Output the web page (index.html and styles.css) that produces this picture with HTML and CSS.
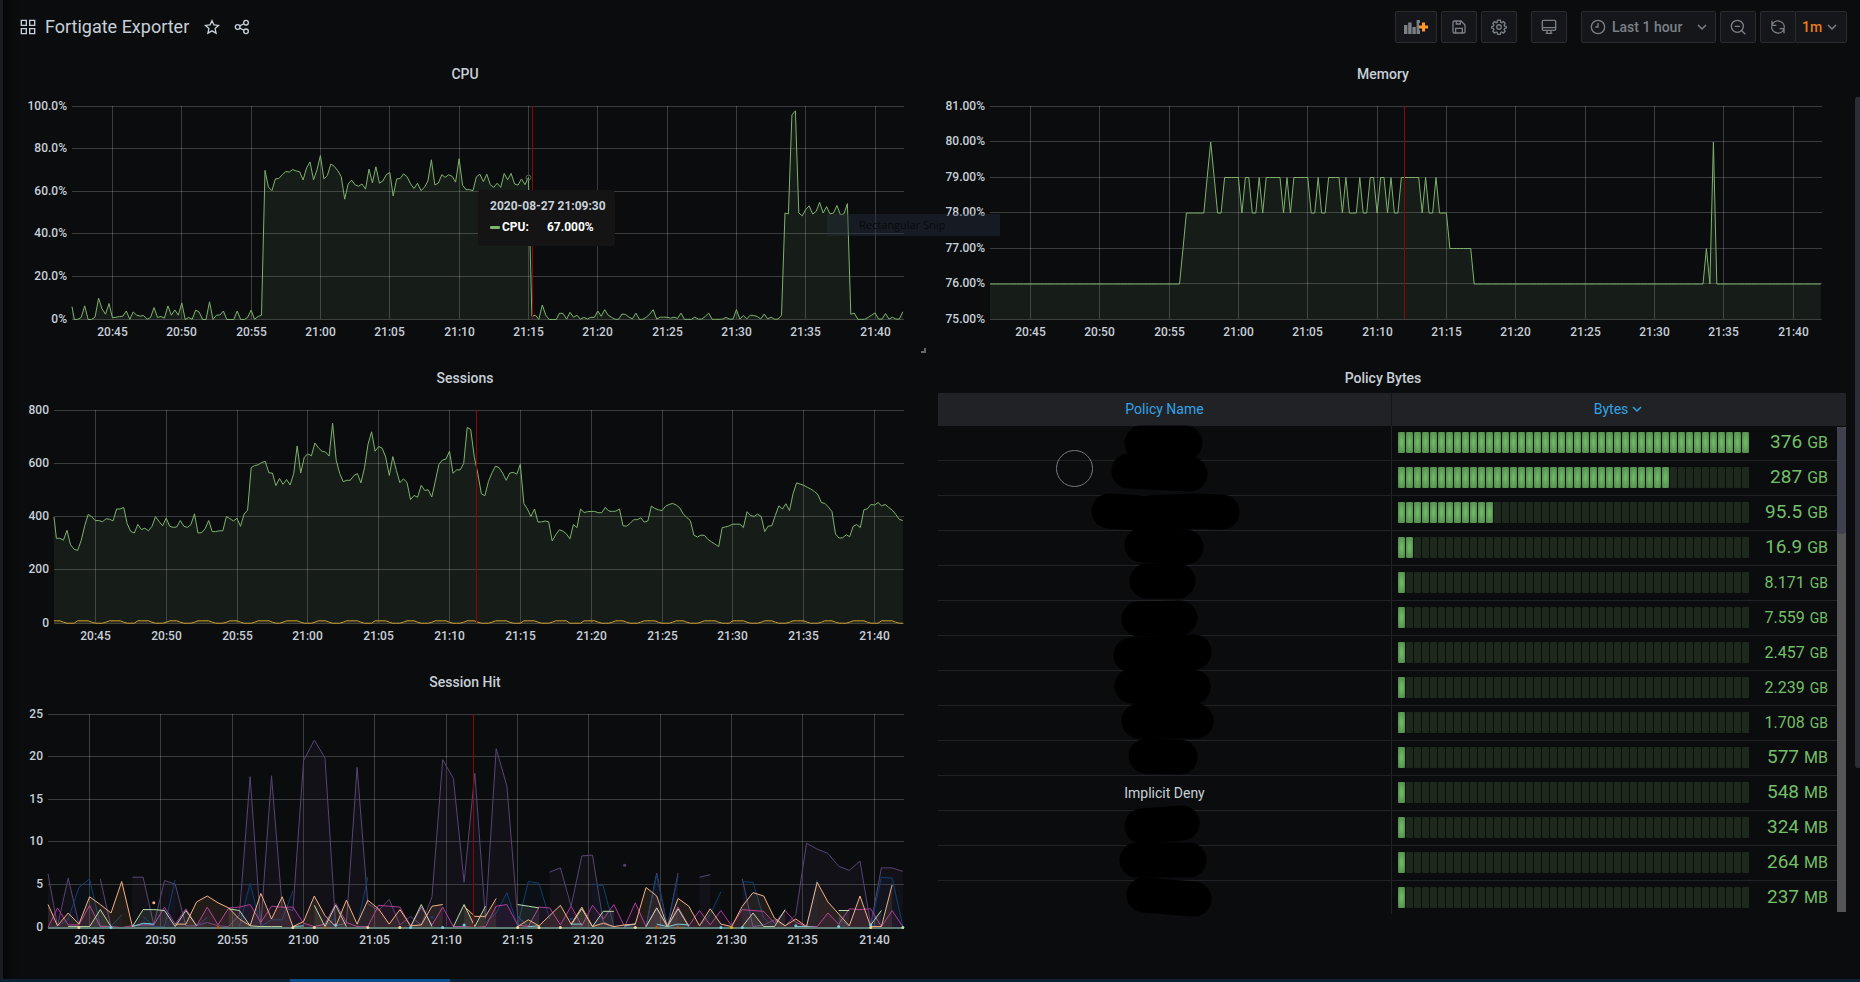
FILE: index.html
```html
<!DOCTYPE html>
<html lang="en">
<head>
<meta charset="utf-8">
<title>Fortigate Exporter</title>
<link rel="stylesheet" href="styles.css">
</head>
<body>

<header class="navbar">
  <svg class="icon icon-apps" viewBox="0 0 24 24"><path d="M2 2h7.500v7.500H2zM14.500 2H22v7.500h-7.500zM2 14.500h7.500V22H2zM14.500 14.500H22V22h-7.500z"/></svg>
  <h1>Fortigate Exporter</h1>
  <button class="plain" aria-label="Star"><svg class="icon" viewBox="0 0 24 24"><path d="M12 2.500l2.900 6.300 6.900.8-5.100 4.700 1.400 6.900L12 17.800l-6.100 3.400 1.400-6.900L2.200 9.600l6.900-.8z"/></svg></button>
  <button class="plain" aria-label="Share"><svg class="icon" viewBox="0 0 24 24"><circle cx="18" cy="5.500" r="3.500"/><circle cx="18" cy="18.500" r="3.500"/><circle cx="5.500" cy="12" r="3.500"/><path d="M8.600 10.300l6.300-3.200M8.600 13.700l6.300 3.200"/></svg></button>

  <div class="toolbar">
    <button class="tool add" aria-label="Add panel"><svg class="addpanel" viewBox="0 0 24 14"><path class="bars" d="M0 5h3.400v9H0zM4.200 2.500h3.400V14H4.200zM8.400 7h3.400v7H8.400zM12.600 0h3.400v3h-1v7h1v4h-3.400z"/><path class="plus" d="M18 2.500h3V5.500h3v3h-3v3h-3v-3h-3v-3h3z"/></svg></button>
    <button class="tool" aria-label="Save dashboard"><svg class="icon" viewBox="0 0 24 24"><path d="M3 5a2 2 0 0 1 2-2h10l6 6v10a2 2 0 0 1-2 2H5a2 2 0 0 1-2-2zM8 3v4.500h6V3M7 21v-7h10v7"/></svg></button>
    <button class="tool" aria-label="Settings"><svg class="icon" viewBox="0 0 24 24"><path d="M10 1.800h4l.6 3 1.600.7 2.600-1.700 2.400 2.700-1.500 2.600.6 1.500 2.600.6v2.400l-2.600.8-.6 1.600 1.500 2.500-2.500 2.600-2.500-1.600-1.600.7-.6 2.900h-4l-.6-2.900-1.600-.7-2.500 1.600-2.500-2.600 1.500-2.500-.6-1.600-2.600-.8v-2.400l2.600-.6.6-1.500L2.800 6.500l2.400-2.700 2.600 1.700 1.600-.7z"/><circle cx="12" cy="12" r="3.400"/></svg></button>
    <button class="tool view" aria-label="Cycle view mode"><svg class="icon" viewBox="0 0 24 24"><path d="M2 3.500A1.500 1.500 0 0 1 3.500 2h17A1.500 1.500 0 0 1 22 3.500v12a1.500 1.500 0 0 1-1.500 1.500h-17A1.500 1.500 0 0 1 2 15.500zM2 13h20M9 17v4M15 17v4M7 21.500h10"/></svg></button>
    <button class="tool time"><svg class="icon" viewBox="0 0 24 24"><circle cx="12" cy="12" r="10"/><path d="M12 6v6H8"/></svg><span>Last 1 hour</span><svg class="chevron" viewBox="0 0 10 10"><path d="M1 3l4 4 4-4"/></svg></button>
    <button class="tool" aria-label="Zoom out"><svg class="icon" viewBox="0 0 24 24"><circle cx="11" cy="11" r="9"/><path d="M17.500 17.500L23 23M7 11h8"/></svg></button>
    <div class="refresh">
      <button class="tool" aria-label="Refresh"><svg class="icon" viewBox="0 0 24 24"><path d="M3 9.500A9.500 9.500 0 0 1 21.500 13M3 2.500v7h6.500M21 14.500A9.500 9.500 0 0 1 2.500 11M21 21.500v-7h-6.500"/></svg></button>
      <button class="tool interval">1m<svg class="chevron" viewBox="0 0 10 10"><path d="M1 3l4 4 4-4"/></svg></button>
    </div>
  </div>
</header>

<main class="dashboard">
  <section class="panel">
    <h2>CPU</h2>
    <div class="chart" id="cpu"></div>
    <div class="tooltip">
      <div class="tooltip-time">2020-08-27 21:09:30</div>
      <div class="tooltip-row"><i></i><b>CPU:</b><b class="val">67.000%</b></div>
    </div>
    <div class="snip">Rectangular Snip</div>
    <span class="resize"></span>
  </section>

  <section class="panel">
    <h2>Memory</h2>
    <div class="chart" id="memory"></div>
  </section>

  <section class="panel">
    <h2>Sessions</h2>
    <div class="chart" id="sessions"></div>
  </section>

  <section class="panel policy">
    <h2>Policy Bytes</h2>
    <div class="tablewrap">
      <table>
        <thead>
          <tr><th>Policy Name</th><th>Bytes<svg class="chevron" viewBox="0 0 10 10"><path d="M1 3l4 4 4-4"/></svg></th></tr>
        </thead>
        <tbody id="policies"></tbody>
      </table>
      <svg class="redacted" viewBox="0 0 160 492">
        <path d="M58 18H101M45 46L106 49M25 86L60 88L110 86L138 87M58 120L102 122M63 156H94M55 194L96 193M47 230L110 227M48 261L109 262M55 296H112M62 331L96 332M58 401L98 398M53 435H105M60 470L110 474"/>
      </svg>
      <span class="ring"></span>
      <div class="scrollbar"><span></span></div>
    </div>
  </section>

  <section class="panel">
    <h2>Session Hit</h2>
    <div class="chart" id="hits"></div>
  </section>
</main>

<div class="pagescroll"></div>
<footer class="taskbar"><span></span></footer>

<script src="script.js"></script>
</body>
</html>
```
FILE: styles.css
```css
* { box-sizing: border-box; }

body {
  margin: 0;
  min-height: 100vh;
  display: flex;
  flex-direction: column;
  background: linear-gradient(to right, #1a1b1f 3px, #060708 3px, #0b0c0e 20px);
  color: #c7d0d9;
  font-family: Roboto, "Liberation Sans", sans-serif;
  font-size: 14px;
}

h1, h2 { margin: 0; }
button { font: inherit; color: inherit; cursor: pointer; }

/* icons */
.icon, .chevron {
  flex: none;
  fill: none;
  stroke: currentColor;
  stroke-width: 2;
}
.icon { width: 16px; height: 16px; }
.chevron { width: 10px; height: 10px; stroke-width: 1.500; }

/* top bar */
.navbar {
  display: flex;
  align-items: center;
  height: 60px;
  padding: 0 13px 6px 20px;
}
.navbar h1 {
  margin: 0 13px 0 9px;
  font-size: 18px;
  font-weight: 400;
  line-height: 24px;
}
.plain {
  display: flex;
  width: 20px;
  margin-right: 10px;
  padding: 2px;
  border: 0;
  background: none;
}
.toolbar {
  display: flex;
  gap: 4px;
  margin-left: auto;
}
.tool {
  display: flex;
  align-items: center;
  justify-content: center;
  width: 36px;
  height: 32px;
  padding: 0 0 1px;
  border: 1px solid #292b2f;
  border-radius: 2px;
  background: #141619;
  color: #7b8087;
  font-weight: 500;
}
.add { width: 42px; }
.addpanel { width: 24px; height: 14px; }
.bars { fill: #7b8087; }
.plus { fill: #ff9830; }
.view { margin: 0 10px; }
.time {
  width: 135px;
  justify-content: flex-start;
  padding: 0 8px 1px;
}
.time span { flex: 1; margin-left: 6px; text-align: left; }
.refresh { display: flex; }
.refresh .tool + .tool { margin-left: -1px; }
.interval {
  width: 52px;
  justify-content: flex-start;
  gap: 5px;
  padding-left: 6px;
  color: #eb7b18;
}
.interval .chevron { color: #7b8087; }

/* panels */
.dashboard {
  display: grid;
  grid-template-columns: 1fr 1fr;
  grid-auto-rows: 304px;
  padding: 0 18px 0 6px;
}
.panel { position: relative; min-width: 0; }
.panel h2 {
  font-size: 14px;
  font-weight: 500;
  line-height: 28px;
  text-align: center;
}
.chart { height: 268px; }
.chart svg { display: block; width: 100%; height: 100%; }
.chart text {
  fill: #c7d0d9;
  font-size: 12px;
  font-weight: 500;
}
.grid { stroke: rgba(255, 255, 255, .2); }
.now { stroke: #8f0505; }

.tooltip {
  position: absolute;
  z-index: 2;
  left: 472px;
  top: 130px;
  width: 137px;
  height: 56px;
  padding: 6px 12px;
  border-radius: 4px;
  background: #141414;
  font-size: 12px;
  line-height: 21px;
  white-space: nowrap;
}
.tooltip-time { font-weight: 700; }
.tooltip-row { display: flex; align-items: center; color: #fff; }
.tooltip-row i {
  width: 10px;
  height: 3px;
  margin-right: 2px;
  border-radius: 1px;
  background: #7eb26d;
}
.tooltip-row .val { margin-left: 18px; }

.snip {
  position: absolute;
  z-index: 1;
  left: 821px;
  top: 154px;
  width: 173px;
  height: 22px;
  padding-left: 32px;
  background: rgba(40, 50, 68, .4);
  color: #08090b;
  font: 11px/22px "Open Sans", sans-serif;
}
.resize {
  position: absolute;
  right: -2px;
  bottom: 11px;
  width: 5px;
  height: 5px;
  border: solid #66676a;
  border-width: 0 2px 2px 0;
}

/* policy table */
.policy { grid-row: 2 / span 2; grid-column: 2; }
.tablewrap {
  position: relative;
  margin: 1px -4px 0 14px;
}
table {
  width: 100%;
  border-collapse: separate;
  border-spacing: 0;
  table-layout: fixed;
}
th {
  height: 33px;
  padding: 0 0 2px;
  border-right: 1px solid #141619;
  background: #202226;
  color: #33a2e5;
  font-weight: 400;
}
th:last-child { padding-right: 2px; border-right: 0; }
th .chevron { margin-left: 4px; }
td {
  height: 35px;
  padding: 0 0 1px;
  border-bottom: 1px solid #202226;
  text-align: center;
}
tr:last-child td { height: 33px; border-bottom: 0; }
td:first-child { border-right: 1px solid #202226; }
.gauge {
  display: flex;
  align-items: center;
  padding: 0 18px 0 6px;
}
.cells { display: flex; flex: 1; gap: 1px; }
.cells i {
  flex: 1;
  height: 21px;
  border-radius: 1px;
  background: #1c291c;
}
.cells .lit { background: radial-gradient(ellipse 5px 16px, #73bf69, #4a7f45); }
.value {
  width: 79px;
  color: #73bf69;
  font-size: 19px;
  line-height: 24px;
  text-align: right;
}
.value small { margin-left: 5px; font-size: 16px; }
.value.long { font-size: 16px; }
.value.long small { font-size: 14px; }

.redacted {
  position: absolute;
  top: 32px;
  left: 25%;
  width: 160px;
  height: 492px;
  margin-left: -81px;
  fill: none;
  stroke: #000;
  stroke-width: 35;
  stroke-linecap: round;
  stroke-linejoin: round;
}
.ring {
  position: absolute;
  left: 118px;
  top: 57px;
  width: 37px;
  height: 37px;
  border: 1px solid #77757f;
  border-radius: 50%;
}
.scrollbar {
  position: absolute;
  top: 34px;
  right: 0;
  width: 9px;
  height: 485px;
  background: #555557;
}
.scrollbar span {
  display: block;
  height: 107px;
  border-radius: 4px;
  background: #3f414f;
}

/* screen edges */
.pagescroll {
  position: absolute;
  top: 97px;
  right: 0;
  width: 5px;
  height: 671px;
  border-radius: 3px 0 0 3px;
  background: #2c2d36;
}
.taskbar {
  height: 3px;
  margin-top: auto;
  background: #0b2237;
}
.taskbar span {
  display: block;
  width: 160px;
  height: 3px;
  margin-left: 290px;
  background: #0b4f8f;
}
```
FILE: script.js
```js
// samples are 15s (or 45s) apart, the window is 60 minutes from 20:42:05
var FIRST = -0.083;
var TICKS = ['20:45', '20:50', '20:55', '21:00', '21:05', '21:10', '21:15', '21:20', '21:25', '21:30', '21:35', '21:40'];

var cpu = [
  6, 0, .1, 1, 6.4, 0, 0, 1.2, 10, 5, 2.5, 7.5, 1, 1, 1.4, 1.5, 4, .1, 3.5, 2, 1.6, 1.9, .1, 1, 5.6, 1, 1.4, .6, 6.4, 2,
  4.5, 2, 7.8, 0, 1, .1, 4.4, 3.5, 0, 0, 8.3, 0, 2, 2.1, 4, 0, 0, 0, 4, 0, 0, 1, 4.4, .1, 1.4, 2,
  70, 62.2, 60.5, 66, 66.2, 68, 69.5, 69.2, 70.4, 69.7, 69.4, 65.5, 71.2, 74, 65.6, 70.3, 77, 66, 67.6, 73, 71.9, 69.8, 67.2,
  56.5, 63.7, 65.4, 63.2, 62.6, 63.6, 61.2, 70.6, 64.2, 71.7, 64, 65, 68, 69, 58, 66, 66.2, 68.4, 67, 63.7, 61.5, 64, 60.5,
  62, 65, 75, 63.2, 64, 68, 66.7, 68, 67.2, 64.5, 75.5, 63, 61, 61, 60.5, 67, 68.2, 64.7, 68.2, 63.3, 62, 64, 62, 68.6, 65.6,
  68.6, 63.6, 63.1, 66, 63.3, 66.6,
  1.5, 2, .1, 6.8, 2, 0, 0, 0, 3, 2.7, .2, 3.4, 1.1, 2, .2, 1, .3, 1, 1, 4, 1.5, 4.6, 2, 1, .1, .1, 2.6, 2.4, 1.1, .3, 3,
  .1, .1, 1.1, 2.6, 4.6, .2, 1.1, 1.1, 1.1, .6, 1.1, .5, 3, .1, .1, .1, 1.1, .2, .2, 1.4, 3, .1, .1, .1, .2, 1, .2, .2, 4.6,
  .2, 1.9, .3, 2, 1.9, 1.4, .3, 2.6, .3, 1.1, .1, .2, 2,
  50, 49.6, 96, 98, 50, 48.7, 51.7, 53.4, 49.5, 50.8, 55, 50, 53, 49.6, 50, 53.5, 49.2, 49.6, 54.4,
  2.5, 3, .1, .1, .1, 1, 2, 3.1, .2, .2, 2.8, .2, 1.1, .2, .2, 3.6
];

// memory only moves in whole percents: [sample, value] at each corner
var memory = expand([
  [0, 76], [55, 76], [57, 78], [62, 78], [64, 80], [66, 78], [67, 78], [68, 79], [72, 79], [73, 78], [74, 79], [75, 79],
  [76, 78], [77, 78], [78, 79], [79, 78], [80, 79], [84, 79], [85, 78], [86, 79], [87, 78], [88, 79], [92, 79], [93, 78],
  [94, 78], [95, 79], [96, 78], [97, 78], [98, 79], [101, 79], [102, 78], [103, 79], [104, 78], [106, 78], [107, 79],
  [108, 78], [109, 78], [110, 79], [111, 79], [112, 78], [113, 79], [114, 79], [115, 78], [116, 79], [117, 78], [118, 78],
  [119, 79], [124, 79], [125, 78], [126, 79], [127, 78], [128, 78], [129, 79], [130, 78], [132, 78], [133, 77], [139, 77],
  [140, 76], [206, 76], [207, 77], [208, 76], [209, 80], [210, 76], [240, 76]
]);

var sessions = [
  400, 320, 320, 313, 350, 296, 279, 274, 312, 367, 410, 401, 386, 387, 382, 393, 392, 385, 430, 430, 436, 375, 346, 340,
  372, 353, 358, 348, 365, 401, 383, 367, 396, 365, 361, 363, 387, 365, 361, 371, 412, 340, 341, 356, 387, 345, 345, 348,
  348, 402, 394, 385, 395, 365, 411, 426, 586, 593, 596, 605, 609, 566, 565, 518, 545, 523, 541, 520, 563, 667, 565, 625,
  637, 630, 678, 660, 647, 644, 629, 752, 613, 564, 533, 538, 538, 556, 563, 528, 585, 673, 720, 647, 665, 658, 625, 556,
  627, 575, 529, 543, 530, 465, 481, 474, 519, 500, 502, 475, 535, 598, 614, 617, 647, 564, 577, 577, 601, 736, 729, 625,
  563, 487, 480, 533, 566, 591, 585, 565, 538, 565, 568, 561, 598, 450, 430, 402, 430, 381, 382, 385, 382, 310, 333, 352,
  347, 337, 318, 372, 360, 430, 417, 420, 421, 421, 416, 416, 436, 422, 421, 422, 430, 367, 366, 376, 390, 390, 397, 381,
  385, 441, 432, 427, 424, 440, 447, 451, 445, 435, 412, 398, 387, 332, 325, 332, 331, 316, 306, 298, 289, 360, 363, 367,
  373, 373, 373, 360, 420, 406, 402, 411, 402, 345, 366, 367, 406, 442, 430, 450, 424, 487, 528, 524, 519, 512, 505, 496,
  485, 454, 451, 437, 420, 336, 321, 322, 333, 326, 365, 372, 360, 427, 431, 447, 445, 454, 442, 447, 436, 426, 410, 391, 387
];

var setup = [];
for (var k = 0; k <= 240; k++) {
  var phase = (k + 1.4) % 8.4;
  setup.push(phase < 3.6 ? 10 : phase < 4.6 || phase > 7.6 ? 5 : 1);
}

// a run is [first sample, value, value, ...]; a run with one value is a lone dot
var hits = [
  { color: '#584477', runs: [
    [0, 6.3, .2, 5.8, .4], [5, 5.7, .1],
    [8, 5.9, 5.9, .3, 5.5, 5.1, .2, .2, .6, .2, .1, 1.5, 17.7, .2, 17.8, 2.4, 2, 19.6, 22, 19.9, .2, .5, 18.8, 2.8, 2, 3.3, .3,
      1.3, .3, 3.6, 19.7, 17.5, 5.3, 18.1, 1, 21, 16.6, 1.3, .1],
    [47, 6.5, 7, 2.5, 8.4, 8.5, .7, 0], [54, 7.3], [56, .1, 6.4, .1, 6.4], [61, 5.9, 6.2],
    [65, 5.7, .1, .3, .9, .2, 1.5, 9.9, 9.2, 8.7, 7.2, 6.7, 7.8, .3, 7, 7, 6.6] ] },
  { color: '#0f3f70', runs: [
    [0, 0, .1, 1, 4.7, 5.7, .2, .1, 1.5], [9, 1.3, .1, .1, 5.6], [14, .2, 1.2], [18, .1, 5.2, .1, .9, .9, 4.3], [26, .1, 1.2],
    [29, .1, 5.9], [36, 1.2], [38, .1, .1], [41, .6, 1.7, 4.1, .2, 5.4, 5.2, 1], [49, 1], [51, 5.1, 4.9, .1], [54, .1, .5],
    [56, .1, 6.2, .1, 6], [61, .3, 1.5, 4.2], [65, 5.4, 5.3, 1.1, .1], [71, .1, 5.6], [74, 1.1, .1], [77, .1, 5.9, 5.8, .2] ] },
  { color: '#a83c98', runs: [
    [0, 0, 2.3, .3, .3, 2.6, .1, .1, 0, .2, .3, .3, 2.4, .4, 2.2, .2, 2.4, .3, 2.3, 2.4, 2.7, .6, 2.5, 2.4, 2.4, .5, .1, .4, 2.8,
      .6, .1, .1, 2.6, 2.5, 2.4, .1, 2.4, .3, 2.4, .1, .1, 0, .1, 2.5, 2.7, .3, .1, 2.4, 2.3, .3, 2.5, .2, 2.6, 1, 2.7, .1, 2.9,
      .1, 2.3, .1, 2.4, .2, 2, .3, 2, .2, 2.1, 2, 1.9, .5, 2, .6, .1, .1, 1.7, .4, 2.2, 2.1, 2.2, .1, 2, .1] ] },
  { color: '#b7dbab', runs: [
    [2, .1, .1, .1, 2.1, .1], [8, .1, 2.1, 2.1, 2, .1, 2, .2], [17, 2.2, 2, .2, .1, .1, .1], [25, 2.6, .1, 2.6, .1],
    [34, .1, 2.7, .1], [38, .1, 2.7, .1, 2.5], [44, 2.7, 2.5, 2.3], [49, .3, 2.2, .1, 1.9, 1.9], [56, .1, 2.3, .1, 2.2, .1],
    [65, .1, 1.7, .1, .1, 2.1], [74, 2, 2], [77, .3, 2], [80, 0] ] },
  { color: '#6ed0e0', runs: [
    [8, .1, .5, .4], [23, .1, .2], [49, .4, .4], [54, .2, .4], [57, .4, .1, .4, .3], [70, .1, .1, 0], [45, .1, .2],
    [6, 0], [27, .3], [37, 0], [39, .3], [34, 0], [63, 0], [65, 0], [70, .2], [74, .1], [77, .3] ] },
  { color: '#f2b184', runs: [
    [0, 2.7, .2, 1.7, .4, 3.6, 2.7, 1.7, 5.4, .1], [10, 2.9],
    [12, .4, .4, 3, 3.7, 2.9, 2.3, 1, .2, 4, 1, 3.6, .1, .7, 3.7, 1.4, .1, 3.2, .4, 3.2, 2.2, .4, 2.1, .2, .3, 2.5, 2.7],
    [39, 2.5, 1.3, 1.3, 3.4],
    [44, .1, .9, .2, 1.4, 2.6, .4, 2.4, .1, .5, .1, .3, .4, 4.7, 3.7, .1, 3.4, 2.5, .2, 2.2, .4, .1, 2.5, 4.1, 3.7, 1.1, .2, 1,
      .1, 5.3, 3, 1.6, .2, 3.7, .1, .1, 5] ] },
  { color: '#f4d598', runs: [ [3, 0], [23, 0], [25, 0], [30, 0], [33, 0], [44, 0], [46, 0], [48, 0], [55, 0], [77, 0] ] },
  { color: '#bf5b17', runs: [ [16, 0], [26, 0], [57, 0], [59, 0] ] },
  { color: '#e5ac0e', runs: [ [64, 0] ] }
];

var charts = {
  cpu: { left: 66, min: 0, max: 100, labels: ['0%', '20.0%', '40.0%', '60.0%', '80.0%', '100.0%'], now: 33.2, step: .25,
    series: [{ color: '#7eb26d', runs: [[0].concat(cpu)] }], hover: [132, 66.6] },
  memory: { left: 66, min: 75, max: 81, labels: ['75.00%', '76.00%', '77.00%', '78.00%', '79.00%', '80.00%', '81.00%'],
    now: 29.9, step: .25, series: [{ color: '#7eb26d', runs: [[0].concat(memory)] }] },
  sessions: { left: 48, min: 0, max: 800, labels: ['0', '200', '400', '600', '800'], now: 29.8, step: .25,
    series: [{ color: '#7eb26d', runs: [[0].concat(sessions)] }, { color: '#cf9f33', runs: [[0].concat(setup)] }] },
  hits: { left: 42, min: 0, max: 25, labels: ['0', '5', '10', '15', '20', '25'], now: 29.8, step: .75, series: hits, base: true }
};

var policies = [
  ['', 44, '376', 'GB'], ['', 34, '287', 'GB'], ['', 12, '95.5', 'GB'], ['', 2, '16.9', 'GB'], ['', 1, '8.171', 'GB'],
  ['', 1, '7.559', 'GB'], ['', 1, '2.457', 'GB'], ['', 1, '2.239', 'GB'], ['', 1, '1.708', 'GB'], ['', 1, '577', 'MB'],
  ['Implicit Deny', 1, '548', 'MB'], ['', 1, '324', 'MB'], ['', 1, '264', 'MB'], ['', 1, '237', 'MB']
];

function expand(corners) {
  var out = [];
  for (var i = 0; i < corners.length - 1; i++) {
    var a = corners[i], b = corners[i + 1];
    for (var s = a[0]; s < b[0]; s++) out.push(a[1] + (b[1] - a[1]) * (s - a[0]) / (b[0] - a[0]));
  }
  out.push(corners[corners.length - 1][1]);
  return out;
}

function draw(id) {
  var c = charts[id], box = document.getElementById(id);
  var top = 18, height = 213, right = box.clientWidth - 20, width = right - c.left;
  function px(min) { return c.left + Math.max(0, min) / 60 * width; }
  function py(v) { return top + .5 + height - (v - c.min) / (c.max - c.min) * height; }
  function line(cls, x1, y1, x2, y2) {
    return '<line class="' + cls + '" x1="' + x1 + '" y1="' + y1 + '" x2="' + x2 + '" y2="' + y2 + '"/>';
  }
  var s = '<svg>', dots = '';
  c.labels.forEach(function (label, i) {
    var y = top + Math.floor(height - i * height / (c.labels.length - 1)) + .5;
    s += line('grid', c.left, y, right, y);
    s += '<text x="' + (c.left - 5) + '" y="' + (y + 3.5) + '" text-anchor="end">' + label + '</text>';
  });
  TICKS.forEach(function (label, i) {
    var x = Math.floor(px(2.92 + i * 5)) + .5;
    s += line('grid', x, top, x, top + height);
    s += '<text x="' + x + '" y="' + (top + height + 17) + '" text-anchor="middle">' + label + '</text>';
  });
  c.series.forEach(function (one) {
    one.runs.forEach(function (run) {
      var pts = run.slice(1).map(function (v, i) {
        return px(FIRST + (run[0] + i) * c.step).toFixed(1) + ',' + py(v).toFixed(1);
      });
      if (pts.length == 1) {
        var p = pts[0].split(',');
        dots += '<circle cx="' + p[0] + '" cy="' + p[1] + '" r="1.5" fill="' + one.color + '"/>';
        return;
      }
      var x0 = pts[0].split(',')[0], x1 = pts[pts.length - 1].split(',')[0];
      s += '<polygon fill="' + one.color + '" fill-opacity=".1" points="' + x0 + ',' + py(c.min) + ' ' + pts.join(' ') + ' ' + x1 + ',' + py(c.min) + '"/>';
      s += '<polyline fill="none" stroke="' + one.color + '" points="' + pts.join(' ') + '"/>';
    });
  });
  if (c.base) s += '<line stroke="#5f7d74" stroke-width="2" x1="' + c.left + '" y1="232" x2="' + right + '" y2="232"/>';
  s += dots;
  var n = Math.floor(px(c.now)) + .5;
  s += line('now', n, top, n, top + height);
  if (c.hover) s += '<circle cx="' + px(FIRST + c.hover[0] * c.step) + '" cy="' + py(c.hover[1]) + '" r="2.5" fill="none" stroke="#4d6b46"/>';
  box.innerHTML = s + '</svg>';
}

function drawAll() {
  for (var id in charts) draw(id);
}

document.getElementById('policies').innerHTML = policies.map(function (p) {
  var cells = '';
  for (var i = 0; i < 44; i++) cells += i < p[1] ? '<i class="lit"></i>' : '<i></i>';
  return '<tr><td>' + p[0] + '</td><td><div class="gauge"><div class="cells">' + cells + '</div>' +
    '<div class="value' + (p[2].length > 4 ? ' long' : '') + '">' + p[2] + '<small>' + p[3] + '</small></div></div></td></tr>';
}).join('');

drawAll();
window.addEventListener('resize', drawAll);
```
